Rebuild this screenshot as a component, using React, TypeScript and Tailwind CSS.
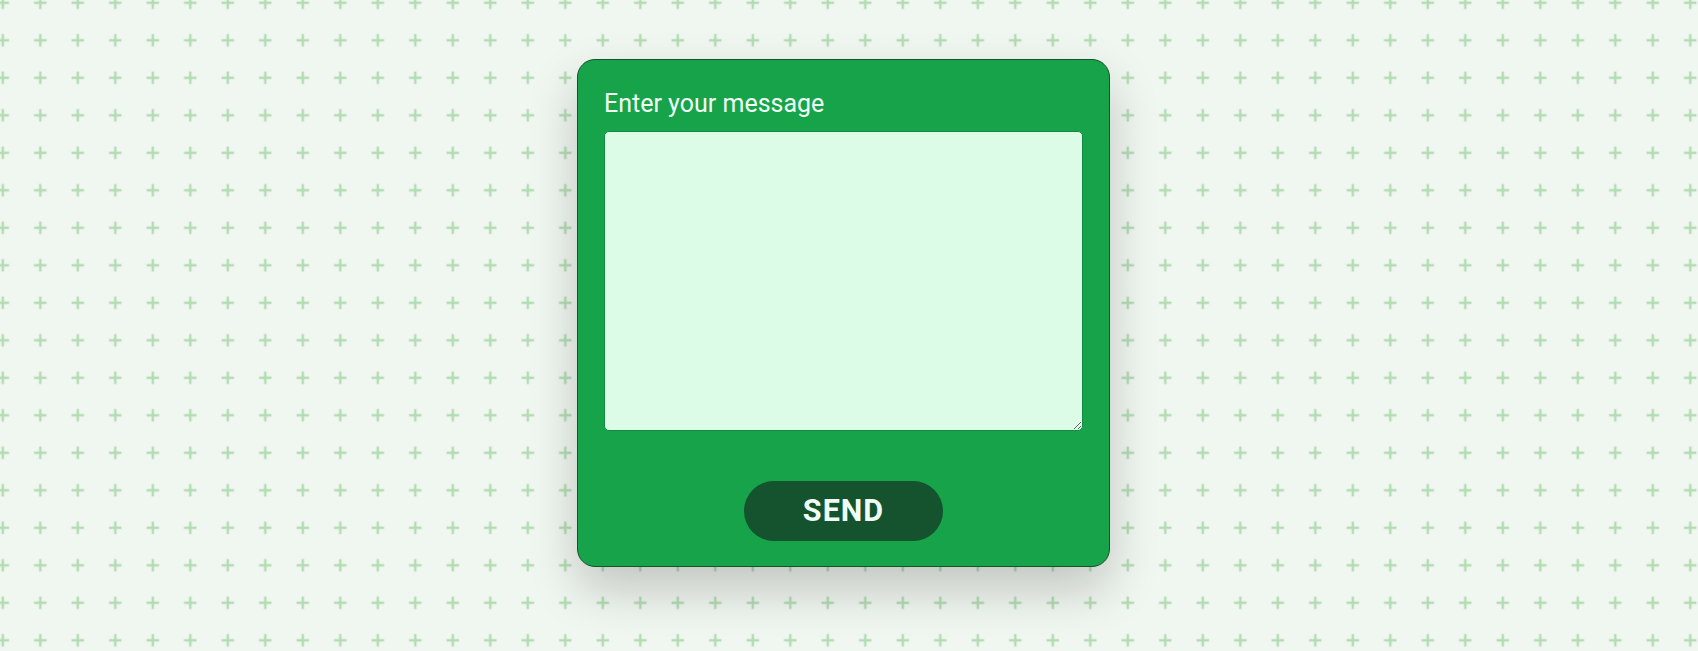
import React, { useState } from "react";

const PlusPattern: React.FC = () => (
	<svg className="absolute inset-0 h-full w-full" aria-hidden="true">
		<defs>
			<pattern
				id="plus-grid"
				width="37.5"
				height="37.5"
				x="-15.95"
				y="-15.95"
				patternUnits="userSpaceOnUse"
			>
				<rect x="12.5" y="17.5" width="12.5" height="2.5" fill="#b4dcb4" />
				<rect x="17.5" y="12.5" width="2.5" height="12.5" fill="#b4dcb4" />
			</pattern>
		</defs>
		<rect width="100%" height="100%" fill="url(#plus-grid)" />
	</svg>
);

const App: React.FC = () => {
	const [message, setMessage] = useState("");

	return (
		<div className="relative h-screen w-full overflow-hidden bg-[#f0f6f0] font-['Roboto',sans-serif]">
			<PlusPattern />
			<div className="relative flex justify-center pt-[59px] pr-[11px]">
				<form
					onSubmit={(e) => e.preventDefault()}
					className="flex w-[533px] flex-col rounded-[18px] border border-[#14532d] bg-[#16a34a] px-[26px] pt-[29px] pb-[25px] shadow-[0_22px_50px_rgba(0,0,0,0.2)]"
				>
					<label
						htmlFor="message"
						className="text-[25px] leading-[29px] text-[#f0fdf4]"
					>
						Enter your message
					</label>
					{/* textarea */}
					<textarea
						id="message"
						value={message}
						onChange={(e) => setMessage(e.target.value)}
						className="mt-[13px] h-[300px] w-full rounded-[5px] border border-[#128a3f] bg-[#dcfce7] p-2 text-base text-[#14532d] outline-none"
					/>
					<button
						type="submit"
						className="mx-auto mt-[50px] flex h-[60px] w-[199px] items-center justify-center rounded-full bg-[#14532d] text-[30.5px] font-bold tracking-[1px] text-[#f0fdf4]"
					>
						SEND
					</button>
				</form>
			</div>
		</div>
	);
};

export default App;
